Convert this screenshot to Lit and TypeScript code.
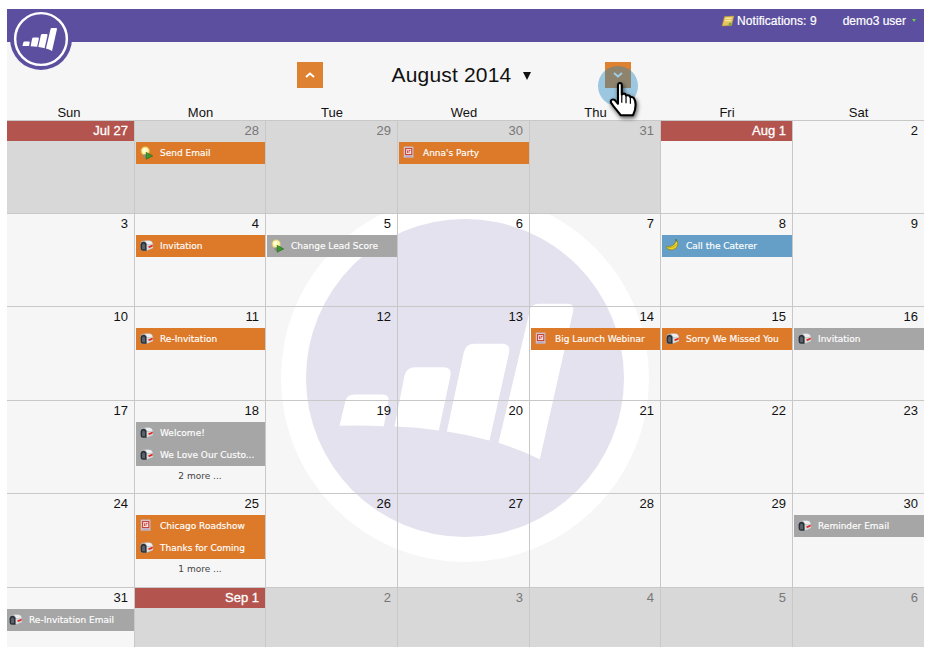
import { LitElement, html, svg, css } from 'lit';
import { customElement } from 'lit/decorators.js';

type IconName = 'mail' | 'bulb' | 'web' | 'banana';
type Tone = 'orange' | 'gray' | 'blue';

interface CalEvent {
  label: string;
  icon: IconName;
  tone: Tone;
}

interface Day {
  num: string;
  other?: boolean;
  first?: boolean;
  events?: CalEvent[];
  more?: string;
}

const mark = svg`
  <path d="M267 676 L285 600 Q290 582 312 582 L395 582 Q418 582 414 602 L400 677 Q330 674 267 676Z" />
  <path d="M432 678 L462 525 Q468 500 495 500 L580 500 Q604 500 600 525 L565 690 Q500 680 432 678Z" />
  <path d="M589 693 L640 455 Q646 430 672 430 L755 430 Q780 430 776 455 L717 720 Q655 703 589 693Z" />
  <path d="M744 727 L838 330 Q842 310 865 310 L950 310 Q972 310 968 332 L868 776 Q810 748 744 727Z" />
`;

const icons: Record<IconName, unknown> = {
  mail: svg`
    <path d="M3.5 2 L10 1.6 Q13.6 2 14 5.5 L14 9.6 L7 12.6 L3 12.8 Q0.4 12.6 0.4 9 V5.6 Q0.6 2.4 3.5 2Z" fill="#b4b8bc" />
    <path d="M5 2 L10 1.8 Q13.2 2.2 13.6 5 L7.4 5.6 Q7 3 5 2Z" fill="#eceef0" />
    <path d="M3.6 3 Q6.8 3.2 7.2 6.4 V12.6 H3 Q0.6 12.4 0.6 9 V6 Q0.8 3.2 3.6 3Z" fill="#2b3036" />
    <path d="M2.2 7 Q2.2 4.8 3.8 4.8 Q5.4 4.8 5.4 7 V11 H2.2Z" fill="#59626b" />
    <path d="M7.2 6.2 L13.8 5.4 V9.6 L7.2 12.4Z" fill="#d9dbdd" />
    <path d="M8.4 8.4 L13.6 5.8 V8 L10 9.6 Z" fill="#dc2a22" />
  `,
  bulb: svg`
    <circle cx="5.6" cy="5.4" r="5" fill="#f0d95c" opacity=".55" />
    <circle cx="5.6" cy="5.2" r="3.9" fill="#fbf6a8" />
    <circle cx="4.8" cy="4.4" r="1.9" fill="#fffde2" />
    <rect x="3.6" y="9" width="4" height="3.6" rx=".8" fill="#8e9088" />
    <path d="M6.6 6.8 L13.6 10.6 L6.6 14.2Z" fill="#3c9a2c" stroke="#1f5f18" stroke-width=".6" />
  `,
  web: svg`
    <path d="M1 .8 H11 V12.4 H1Z" fill="#d9c9cc" stroke="#b9a6ac" stroke-width=".6" />
    <rect x="2.8" y="2.8" width="6.6" height="6.4" fill="#f5e9e6" stroke="#c9362c" stroke-width="1.1" />
    <path d="M4.8 4.6 V7.6 M6.4 4.6 V7.6 M6.4 4.8 H8" stroke="#c9362c" stroke-width=".9" fill="none" />
    <path d="M2.6 11 H9.6" stroke="#a4a0c8" stroke-width="1" />
  `,
  banana: svg`
    <path d="M9.8 .4 L11.6 .2 L11.8 2.2 L10.6 2.8Z" fill="#55701c" />
    <path d="M.6 8 Q4.2 8.6 7.4 6.8 Q10 5.2 10.4 2.4 L12 2.2 Q14 6.4 10.8 9.8 Q6.4 13.2 2.2 11 Q.4 9.8 .6 8Z" fill="#ecd62c" stroke="#78751c" stroke-width=".7" />
    <path d="M1.6 9.4 Q7.4 10.4 11.4 6" fill="none" stroke="#b2a21c" stroke-width=".8" />
  `,
};

const ev = (label: string, icon: IconName, tone: Tone): CalEvent => ({ label, icon, tone });

const weeks: Day[][] = [
  [
    { num: 'Jul 27', first: true, other: true },
    { num: '28', other: true, events: [ev('Send Email', 'bulb', 'orange')] },
    { num: '29', other: true },
    { num: '30', other: true, events: [ev("Anna's Party", 'web', 'orange')] },
    { num: '31', other: true },
    { num: 'Aug 1', first: true },
    { num: '2' },
  ],
  [
    { num: '3' },
    { num: '4', events: [ev('Invitation', 'mail', 'orange')] },
    { num: '5', events: [ev('Change Lead Score', 'bulb', 'gray')] },
    { num: '6' },
    { num: '7' },
    { num: '8', events: [ev('Call the Caterer', 'banana', 'blue')] },
    { num: '9' },
  ],
  [
    { num: '10' },
    { num: '11', events: [ev('Re-Invitation', 'mail', 'orange')] },
    { num: '12' },
    { num: '13' },
    { num: '14', events: [ev('Big Launch Webinar', 'web', 'orange')] },
    { num: '15', events: [ev('Sorry We Missed You', 'mail', 'orange')] },
    { num: '16', events: [ev('Invitation', 'mail', 'gray')] },
  ],
  [
    { num: '17' },
    {
      num: '18',
      events: [ev('Welcome!', 'mail', 'gray'), ev('We Love Our Custo...', 'mail', 'gray')],
      more: '2 more ...',
    },
    { num: '19' },
    { num: '20' },
    { num: '21' },
    { num: '22' },
    { num: '23' },
  ],
  [
    { num: '24' },
    {
      num: '25',
      events: [ev('Chicago Roadshow', 'web', 'orange'), ev('Thanks for Coming', 'mail', 'orange')],
      more: '1 more ...',
    },
    { num: '26' },
    { num: '27' },
    { num: '28' },
    { num: '29' },
    { num: '30', events: [ev('Reminder Email', 'mail', 'gray')] },
  ],
  [
    { num: '31', events: [ev('Re-Invitation Email', 'mail', 'gray')] },
    { num: 'Sep 1', first: true, other: true },
    { num: '2', other: true },
    { num: '3', other: true },
    { num: '4', other: true },
    { num: '5', other: true },
    { num: '6', other: true },
  ],
];

const dayNames = ['Sun', 'Mon', 'Tue', 'Wed', 'Thu', 'Fri', 'Sat'];

@customElement('app-root')
export class AppRoot extends LitElement {
  static styles = css`
    :host {
      display: block;
      width: 932px;
      height: 653px;
      box-sizing: border-box;
      padding: 9px 8px 6px 7px;
      background: #fff;
      overflow: hidden;
      font-family: 'Liberation Sans', Arial, sans-serif;
    }

    .app {
      position: relative;
      height: 638px;
      background: #f6f6f6;
      overflow: hidden;
    }

    .topbar {
      height: 33px;
      background: #5c4f9f;
      display: flex;
      align-items: center;
      justify-content: flex-end;
      gap: 26px;
      padding: 0 8px 10px 0;
      box-sizing: border-box;
      color: #fff;
      font-size: 12px;
      -webkit-text-stroke: 0.2px #fff;
    }

    .notif,
    .user {
      display: flex;
      align-items: center;
      gap: 2px;
    }

    .notif {
      letter-spacing: 0.05px;
    }

    .user {
      gap: 6px;
    }

    .caret {
      width: 0;
      height: 0;
      border-left: 2.5px solid transparent;
      border-right: 2.5px solid transparent;
      border-top: 3px solid #6fd04a;
    }

    .logo {
      position: absolute;
      left: 3px;
      top: -1px;
      width: 62px;
      height: 62px;
    }

    .toolbar {
      height: 54px;
      display: flex;
      align-items: flex-start;
      padding: 20px 0 0 290px;
      box-sizing: border-box;
    }

    .nav-btn {
      width: 26px;
      height: 26px;
      background: #de8231;
      display: flex;
      align-items: center;
      justify-content: center;
      flex: none;
    }

    .title {
      width: 282px;
      height: 26px;
      display: flex;
      align-items: center;
      justify-content: center;
      gap: 12px;
      padding-right: 5px;
      box-sizing: border-box;
      font-size: 21px;
      letter-spacing: 0.18px;
      color: #111;
    }

    .title i {
      width: 0;
      height: 0;
      border-left: 4.5px solid transparent;
      border-right: 4.5px solid transparent;
      border-top: 8px solid #111;
      margin-top: 2px;
    }

    .columns {
      display: grid;
      grid-template-columns: 128px 131px 132px 132px 131px 132px 131px;
      font-size: 13px;
      color: #111;
      height: 24px;
      align-items: end;
      text-align: center;
    }

    .columns span {
      line-height: 15px;
    }

    .columns span:first-child {
      padding-right: 4px;
    }

    .body {
      position: relative;
      border-top: 1px solid #c8c8c8;
      height: 527px;
    }

    .watermark {
      position: absolute;
      left: 273.5px;
      top: 72.5px;
      width: 368px;
      height: 368px;
    }

    .grid {
      position: relative;
      display: grid;
      grid-template-columns: 128px 131px 132px 132px 131px 132px 131px;
      grid-template-rows: 93px 93px 94px 93px 94px 59px;
    }

    .cell {
      box-sizing: border-box;
      border-right: 1px solid #c8c8c8;
      border-bottom: 1px solid #c8c8c8;
      min-width: 0;
    }

    .cell:nth-child(7n) {
      border-right: none;
    }

    .cell:nth-last-child(-n + 7) {
      border-bottom: none;
    }

    .cell.other {
      background: #d8d8d8;
    }

    .num {
      height: 20px;
      line-height: 20px;
      text-align: right;
      padding-right: 6px;
      font-size: 13px;
      color: #111;
    }

    .other .num {
      color: #777;
    }

    .first .num {
      background: #b3544e;
      color: #fff;
      -webkit-text-stroke: 0.3px #fff;
    }

    .events {
      margin-left: 1px;
      padding-top: 1px;
    }

    .cell:nth-child(7n + 1) .events {
      margin-left: 0;
    }

    .ev {
      height: 22px;
      display: flex;
      align-items: center;
      gap: 6px;
      padding-left: 4px;
      font-family: 'DejaVu Sans', Verdana, sans-serif;
      font-size: 9px;
      color: #fff;
      -webkit-text-stroke: 0.15px #fff;
      white-space: nowrap;
      overflow: hidden;
    }

    .cell:nth-child(7n + 1) .ev {
      padding-left: 2px;
    }

    .ev svg {
      width: 14px;
      height: 14px;
      flex: none;
    }

    .ev.orange {
      background: #dc7a2a;
    }

    .ev.gray {
      background: #a6a6a6;
    }

    .ev.blue {
      background: #659fc7;
    }

    .more {
      height: 20px;
      line-height: 20px;
      text-align: center;
      font-family: 'DejaVu Sans', Verdana, sans-serif;
      font-size: 9px;
      color: #444;
    }

    .halo {
      position: absolute;
      left: 591px;
      top: 57px;
      width: 40px;
      height: 40px;
      border-radius: 50%;
      background: rgba(32, 134, 193, 0.42);
    }

    .hand {
      position: absolute;
      left: 602px;
      top: 73px;
      width: 31px;
      height: 37px;
      filter: drop-shadow(1px 2px 2px rgba(0, 0, 0, 0.65));
    }
  `;

  private renderEvent(e: CalEvent) {
    return html`<div class="ev ${e.tone}">
      <svg viewBox="0 0 15 15">${icons[e.icon]}</svg>
      <span>${e.label}</span>
    </div>`;
  }

  private renderDay(day: Day) {
    return html`<div class="cell ${day.other ? 'other' : ''} ${day.first ? 'first' : ''}">
      <div class="num">${day.num}</div>
      ${day.events
        ? html`<div class="events">${day.events.map((e) => this.renderEvent(e))}</div>`
        : ''}
      ${day.more ? html`<div class="more">${day.more}</div>` : ''}
    </div>`;
  }

  render() {
    return html`
      <div class="app">
        <div class="topbar">
          <div class="notif">
            <svg width="14" height="12" viewBox="0 0 14 12">
              <path d="M3.5 1.5 L13 1 L10.5 10.5 L1 11Z" fill="#e6c65a" stroke="#a98f3a" stroke-width=".5" />
              <path d="M4.5 3.5 L10.5 3.2 M4 5.8 L10 5.5" stroke="#fff4c0" stroke-width=".9" />
              <path d="M8 8 L10.5 7.6 L10 10 L7.6 10.2Z" fill="#6da84a" />
            </svg>
            <span>Notifications: 9</span>
          </div>
          <div class="user"><span>demo3 user</span><i class="caret"></i></div>
        </div>

        <svg class="logo" viewBox="13 -98 1261 1261">
          <circle cx="643.5" cy="532.5" r="630" fill="#5c4f9f" />
          <circle cx="643.5" cy="532.5" r="526" fill="none" stroke="#fff" stroke-width="50" />
          <g fill="#fff">${mark}</g>
        </svg>

        <div class="toolbar">
          <div class="nav-btn">
            <svg width="12" height="8" viewBox="0 0 12 8">
              <path d="M2 6 L6 2.5 L10 6" fill="none" stroke="#fff" stroke-width="2" />
            </svg>
          </div>
          <div class="title"><span>August 2014</span><i></i></div>
          <div class="nav-btn">
            <svg width="12" height="8" viewBox="0 0 12 8">
              <path d="M2 2 L6 5.5 L10 2" fill="none" stroke="#fff" stroke-width="2" />
            </svg>
          </div>
        </div>

        <div class="columns">${dayNames.map((d) => html`<span>${d}</span>`)}</div>

        <div class="body">
          <svg class="watermark" viewBox="91.5 -19.5 1104 1104">
            <circle cx="643.5" cy="532.5" r="552" fill="#fff" />
            <circle cx="643.5" cy="532.5" r="477" fill="#e3e2ee" />
            <g fill="#fff">${mark}</g>
          </svg>
          <div class="grid">${weeks.map((week) => week.map((day) => this.renderDay(day)))}</div>
        </div>

        <div class="halo"></div>
        <svg class="hand" viewBox="0 0 28 34">
          <path
            d="M8 3 Q8 1 9.7 1 Q11.5 1 11.5 3 L11.5 11.5 Q13 10.2 14.8 11 L15.4 12.6 Q17.2 11.6 18.8 12.8 L19.4 14 Q21.2 13.2 22.6 14.8 Q24.2 17 24.2 21 Q24.2 26 21.8 30.5 L10.5 30.5 Q7 26 4 22.4 L1.6 19 Q1 16.8 2.6 16.2 Q4.6 15.6 6 17.6 L8 20Z"
            fill="#fff"
            stroke="#000"
            stroke-width="1.9"
            stroke-linejoin="round"
          />
          <path d="M11.5 12 V19 M15.4 13 V19.5 M19.4 14.5 V20" fill="none" stroke="#000" stroke-width="1.1" />
        </svg>
      </div>
    `;
  }
}
